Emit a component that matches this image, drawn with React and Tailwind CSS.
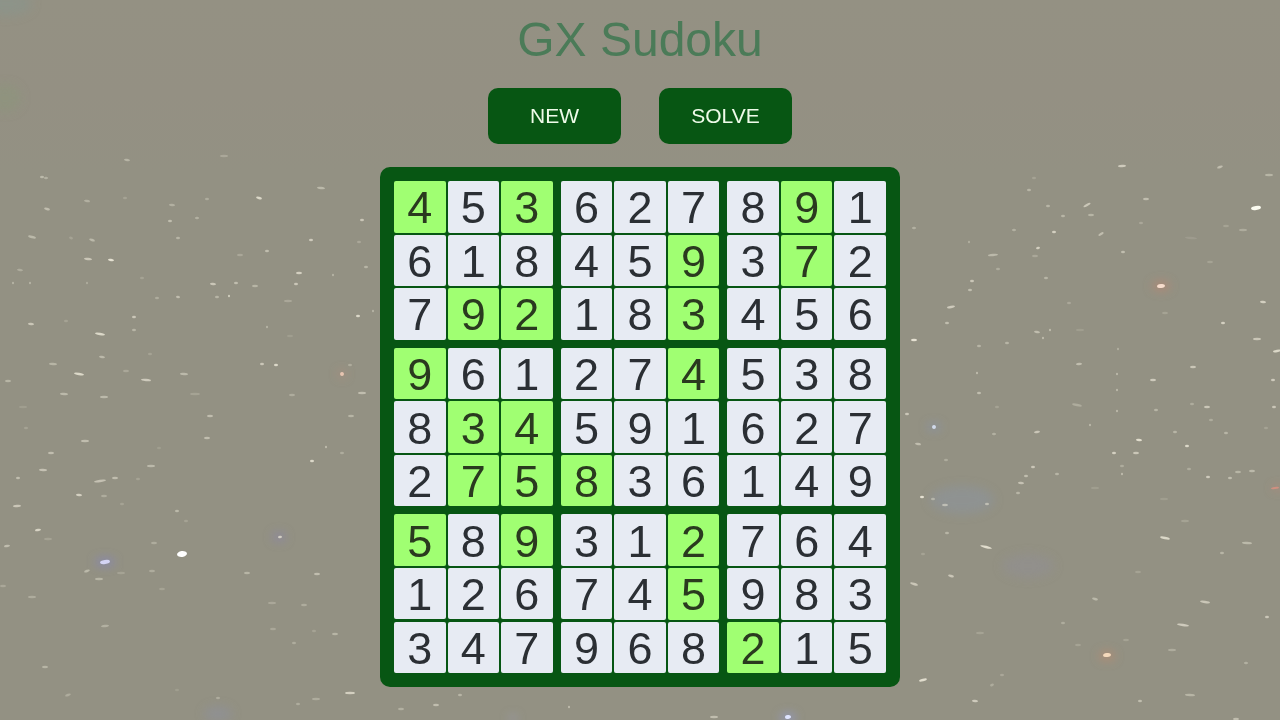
import { useState } from 'react'

const PUZZLE = [
  '453627891',
  '618459372',
  '792183456',
  '961274538',
  '834591627',
  '275836149',
  '589312764',
  '126745983',
  '347968215',
]

// row-major, 1 = given by the puzzle
const GIVEN = [
  '101000010',
  '000001010',
  '011001000',
  '100001000',
  '011000000',
  '011100000',
  '101001000',
  '000001000',
  '000000100',
]

// x, y, half length, opacity, tilt
const STARS = [
  [127, 160, 3, 0.4, 10], [224, 156, 4, 0.25, 0], [42, 177, 2, 0.45, 0], [46, 178, 2, 0.35, 0],
  [321, 188, 4, 0.45, 8], [87, 201, 3, 0.35, 8], [47, 209, 3, 0.5, 15], [125, 198, 2, 0.2, 0],
  [207, 199, 2, 0.3, 0], [259, 198, 3, 0.8, 15], [172, 205, 3, 0.35, 5], [170, 221, 2, 0.5, 0],
  [197, 218, 2, 0.35, 0], [178, 238, 2, 0.4, 0], [362, 220, 2, 0.6, 0], [311, 240, 2, 0.65, 0],
  [32, 237, 4, 0.45, 15], [92, 240, 3, 0.45, 20], [71, 238, 2, 0.2, 20], [359, 242, 2, 0.25, 0],
  [88, 259, 4, 0.6, 8], [111, 260, 3, 0.9, 10], [267, 251, 2, 0.5, 0], [240, 255, 3, 0.25, 0],
  [20, 270, 3, 0.3, 10], [299, 273, 3, 0.7, 0], [296, 284, 2, 0.6, 0], [333, 275, 1, 0.4, 0],
  [366, 267, 2, 0.4, 0], [13, 283, 1, 0.4, 0], [30, 283, 1, 0.4, 0], [87, 283, 1, 0.3, 0],
  [213, 284, 3, 0.6, 5], [236, 283, 2, 0.5, 0], [255, 286, 3, 0.4, 0], [142, 278, 2, 0.2, 0],
  [157, 298, 2, 0.3, 0], [178, 297, 2, 0.5, 5], [217, 297, 2, 0.4, 0], [229, 296, 1, 0.7, 0],
  [288, 301, 4, 0.25, 0], [134, 317, 2, 0.6, 0], [358, 316, 2, 0.8, 0], [373, 311, 1, 0.4, 0],
  [31, 324, 3, 0.6, 5], [66, 321, 2, 0.2, 0], [100, 334, 5, 0.8, 10], [134, 330, 2, 0.4, 0],
  [267, 327, 1, 0.4, 0], [290, 336, 3, 0.15, 0], [102, 357, 3, 0.45, 10], [150, 354, 2, 0.2, 0],
  [53, 364, 4, 0.4, 5], [79, 374, 5, 0.8, 10], [146, 380, 5, 0.65, 5], [184, 374, 4, 0.45, 5],
  [126, 371, 3, 0.25, 0], [8, 381, 3, 0.4, 0], [262, 364, 2, 0.6, 0], [276, 365, 2, 0.8, 0],
  [350, 365, 2, 0.3, 0], [64, 394, 4, 0.45, 5], [104, 397, 4, 0.45, 0], [195, 394, 5, 0.2, 0],
  [292, 395, 3, 0.3, 0], [362, 393, 4, 0.5, 0], [23, 407, 4, 0.15, 0], [210, 416, 3, 0.5, 0],
  [351, 416, 3, 0.4, 0], [26, 428, 2, 0.2, 0], [85, 441, 4, 0.5, 0], [207, 438, 3, 0.5, 0],
  [326, 447, 1, 0.5, 0], [51, 453, 3, 0.5, 0], [159, 448, 2, 0.15, 0], [342, 453, 2, 0.3, 0],
  [43, 470, 4, 0.55, 3], [151, 466, 4, 0.45, 0], [312, 461, 2, 0.8, 0], [18, 478, 2, 0.5, 0],
  [100, 481, 6, 0.55, -8], [115, 478, 3, 0.5, 0], [138, 479, 2, 0.2, 0], [79, 495, 3, 0.7, 5],
  [104, 496, 3, 0.3, 0], [17, 506, 4, 0.6, -5], [122, 504, 2, 0.2, 0], [177, 511, 2, 0.45, 0],
  [38, 530, 3, 0.75, -8], [48, 539, 4, 0.2, 0], [186, 521, 2, 0.2, 0], [7, 546, 3, 0.5, -8],
  [154, 543, 3, 0.3, 0], [280, 537, 2, 0.7, -10], [87, 571, 3, 0.45, -20], [99, 579, 4, 0.4, 0],
  [121, 573, 4, 0.2, 0], [152, 571, 3, 0.3, 0], [247, 573, 3, 0.4, 0], [317, 574, 3, 0.5, 0],
  [3, 586, 3, 0.25, 0], [32, 597, 4, 0.3, 0], [162, 589, 3, 0.2, 0], [272, 603, 4, 0.25, 0],
  [304, 605, 3, 0.3, 0], [105, 626, 4, 0.35, -8], [273, 629, 3, 0.25, 0], [335, 634, 3, 0.4, 0],
  [314, 631, 2, 0.2, 0], [294, 643, 2, 0.3, 0], [45, 667, 3, 0.4, 0], [68, 695, 3, 0.3, -20],
  [177, 690, 2, 0.15, 0], [218, 698, 2, 0.3, 0], [350, 693, 5, 0.7, 0], [316, 699, 4, 0.3, 0],
  [298, 704, 2, 0.3, 0],
  [1122, 166, 4, 0.65, -5], [1220, 167, 3, 0.5, -20], [1269, 175, 4, 0.4, 0], [1029, 190, 2, 0.4, 0],
  [1034, 178, 2, 0.2, 0], [1146, 199, 3, 0.5, 0], [1048, 206, 2, 0.4, 0], [1087, 205, 4, 0.6, -30],
  [1091, 215, 3, 0.4, 0], [1063, 216, 2, 0.4, 0], [1141, 223, 2, 0.25, 0], [914, 228, 2, 0.35, 0],
  [1014, 230, 2, 0.35, 0], [1054, 232, 2, 0.7, 0], [1101, 234, 3, 0.5, -30], [1226, 226, 3, 0.2, 0],
  [1243, 230, 4, 0.3, 0], [969, 242, 1, 0.35, 0], [1038, 248, 2, 0.7, -15], [1123, 252, 2, 0.5, 0],
  [993, 255, 5, 0.45, -5], [1035, 256, 3, 0.25, 0], [1191, 238, 6, 0.12, 5], [1210, 262, 3, 0.2, 0],
  [998, 269, 2, 0.3, 0], [972, 281, 2, 0.6, 0], [970, 290, 2, 0.5, 0], [1046, 278, 2, 0.4, 0],
  [951, 307, 4, 0.65, -10], [947, 323, 2, 0.5, 0], [1069, 303, 2, 0.25, 0], [1165, 313, 3, 0.2, 0],
  [1263, 302, 3, 0.7, 5], [1223, 323, 2, 0.7, 0], [914, 340, 3, 0.9, 0], [1037, 332, 3, 0.5, 10],
  [1043, 338, 1, 0.5, 0], [1050, 330, 1, 0.5, 0], [1007, 343, 2, 0.4, 0], [979, 346, 2, 0.4, 0],
  [1080, 330, 4, 0.15, 0], [1257, 339, 4, 0.6, 0], [1277, 351, 4, 0.8, -10], [1118, 349, 1, 0.35, 0],
  [1079, 364, 3, 0.5, -5], [1193, 367, 3, 0.6, 0], [1153, 380, 3, 0.65, 0], [1273, 380, 2, 0.65, 0],
  [1117, 374, 1, 0.45, 0], [1117, 390, 1, 0.45, 0], [1117, 411, 1, 0.45, 0], [977, 373, 1, 0.5, 0],
  [979, 393, 2, 0.5, 0], [1077, 405, 5, 0.3, 12], [997, 407, 2, 0.2, 0], [907, 414, 2, 0.6, 0],
  [1156, 410, 2, 0.4, 0], [1207, 407, 3, 0.6, 0], [1192, 404, 2, 0.3, 0], [1274, 407, 2, 0.6, 0],
  [1211, 420, 2, 0.3, 0], [1090, 425, 1, 0.45, 0], [1037, 432, 3, 0.6, -10], [1175, 432, 2, 0.4, 0],
  [994, 434, 2, 0.35, 0], [1226, 433, 2, 0.4, 0], [1266, 428, 2, 0.2, 0], [1139, 440, 3, 0.85, 5],
  [1187, 446, 2, 0.8, 0], [918, 444, 3, 0.5, 8], [1114, 453, 2, 0.7, 0], [1136, 453, 3, 0.6, 0],
  [946, 460, 2, 0.3, 0], [1033, 467, 2, 0.6, 0], [1026, 476, 2, 0.5, 0], [1057, 474, 2, 0.4, 0],
  [1122, 466, 2, 0.3, 0], [1122, 474, 1, 0.5, 0], [1021, 483, 3, 0.55, 5], [1018, 493, 2, 0.4, 0],
  [1208, 477, 2, 0.65, 0], [1230, 478, 2, 0.5, 0], [1238, 472, 3, 0.4, 0], [1252, 471, 3, 0.45, 0],
  [1189, 469, 2, 0.3, 0], [1095, 488, 4, 0.15, 0], [922, 497, 2, 0.9, 0], [933, 499, 2, 0.4, 0],
  [945, 505, 3, 0.5, 0], [987, 504, 2, 0.5, 0], [1164, 499, 4, 0.15, 0], [1185, 521, 4, 0.2, 0],
  [947, 533, 2, 0.4, 0], [986, 547, 6, 0.85, 14], [1165, 538, 5, 0.8, 12], [1247, 543, 5, 0.45, 3],
  [1222, 553, 2, 0.4, 0], [923, 554, 2, 0.2, 0], [951, 576, 3, 0.6, 15], [914, 584, 4, 0.6, 18],
  [1138, 572, 3, 0.2, 0], [1095, 599, 3, 0.45, 15], [1205, 602, 5, 0.6, 8], [1267, 617, 2, 0.6, 0],
  [1183, 625, 6, 0.65, 8], [1063, 623, 2, 0.3, 0], [980, 633, 4, 0.2, 0], [1126, 640, 3, 0.2, 0],
  [1172, 650, 4, 0.3, 0], [1078, 645, 3, 0.2, 0], [1246, 663, 2, 0.35, 0], [923, 680, 4, 0.85, -15],
  [1002, 675, 2, 0.25, 0], [992, 685, 2, 0.3, -20], [975, 701, 3, 0.65, 5], [1140, 701, 2, 0.5, 0],
  [1190, 695, 5, 0.4, 3], [1236, 719, 3, 0.5, 0],
  [401, 709, 3, 0.35, 0], [436, 705, 3, 0.5, 0], [460, 695, 2, 0.4, 0], [569, 707, 1, 0.5, 0],
  [714, 717, 4, 0.5, 0],
]

// x, y, rx, ry, colour, opacity
const HAZE = [
  [962, 500, 32, 14, '#8c93a0', 0.5],
  [1028, 566, 26, 12, '#928f94', 0.5],
  [6, 4, 26, 12, '#87958f', 0.5],
  [5, 98, 16, 14, '#8c967a', 0.5],
  [218, 714, 14, 8, '#8e929f', 0.5],
  [105, 562, 10, 4, '#8484bc', 0.8],
  [279, 537, 7, 5, '#8a84a8', 0.7],
  [934, 427, 7, 4, '#8692b0', 0.6],
  [1161, 286, 9, 5, '#bb8570', 0.7],
  [1107, 656, 8, 5, '#bb8a6e', 0.7],
  [342, 374, 4, 4, '#b88c78', 0.6],
  [1278, 488, 6, 2, '#c98272', 0.7],
  [513, 718, 4, 3, '#9a9cb8', 0.7],
  [788, 718, 8, 5, '#9298c4', 0.8],
]

const BRIGHT = [
  [182, 554, 5, 3, '#ffffff'],
  [105, 562, 5, 2, '#d4d4f4'],
  [1256, 208, 5, 2, '#fbfbf0'],
  [1161, 286, 4, 2, '#f6dccc'],
  [1107, 655, 4, 2, '#f4d9bc'],
  [934, 427, 2, 2, '#d0d9ea'],
  [342, 374, 2, 2, '#e6c4b0'],
  [1275, 488, 4, 1, '#cf9080'],
  [788, 717, 3, 2, '#dfe4ff'],
]

function Starfield() {
  return (
    <svg
      className="absolute inset-0 h-full w-full"
      viewBox="0 0 1280 720"
      preserveAspectRatio="xMidYMid slice"
      aria-hidden="true"
    >
      <defs>
        <filter id="haze" x="-100%" y="-100%" width="300%" height="300%">
          <feGaussianBlur stdDeviation="5" />
        </filter>
        <filter id="glow" x="-50%" y="-100%" width="200%" height="300%">
          <feGaussianBlur stdDeviation="0.7" />
        </filter>
        <linearGradient id="dust" x1="0" y1="0" x2="0" y2="1">
          <stop offset="0" stopColor="#949183" />
          <stop offset="0.13" stopColor="#949083" />
          <stop offset="0.24" stopColor="#939183" />
          <stop offset="1" stopColor="#939183" />
        </linearGradient>
      </defs>
      <rect width="1280" height="720" fill="url(#dust)" />
      <g filter="url(#haze)">
        {HAZE.map(([x, y, rx, ry, fill, o]) => (
          <ellipse key={`${x}-${y}`} cx={x} cy={y} rx={rx} ry={ry} fill={fill} opacity={o} />
        ))}
      </g>
      <g filter="url(#glow)" fill="#eeeada">
        {STARS.map(([x, y, r, o, tilt]) => (
          <ellipse key={`${x}-${y}`} cx={x} cy={y} rx={r} ry="1.2" opacity={o} transform={`rotate(${tilt} ${x} ${y})`} />
        ))}
        {BRIGHT.map(([x, y, rx, ry, fill]) => (
          <ellipse key={`${x}-${y}`} cx={x} cy={y} rx={rx} ry={ry} fill={fill} transform={`rotate(-8 ${x} ${y})`} />
        ))}
      </g>
    </svg>
  )
}

function ActionButton({ children, onClick }) {
  return (
    <button
      type="button"
      onClick={onClick}
      className="h-14 w-[133px] rounded-[10px] bg-[#075613] text-[21px] text-[#eefbe9] hover:bg-[#0b6a1a]"
    >
      {children}
    </button>
  )
}

function Cell({ value, given }) {
  return (
    <button
      type="button"
      className={`flex aspect-square items-center justify-center rounded-[2px] pt-[2px] text-[45px] leading-none ${
        given ? 'bg-[#a0ff72] text-[#2a3a1f]' : 'bg-[#e7ebf3] text-[#2b2f34]'
      }`}
    >
      {value}
    </button>
  )
}

function Block({ index, solved }) {
  const top = Math.floor(index / 3) * 3
  const left = (index % 3) * 3

  return (
    <div className="grid grid-cols-3 gap-[2px]">
      {Array.from({ length: 9 }, (_, i) => {
        const r = top + Math.floor(i / 3)
        const c = left + (i % 3)
        const given = GIVEN[r][c] === '1'
        return <Cell key={i} given={given} value={given || solved ? PUZZLE[r][c] : ''} />
      })}
    </div>
  )
}

export default function App() {
  const [solved, setSolved] = useState(true)

  return (
    <div className="relative min-h-screen overflow-hidden bg-[#939183] font-['Liberation_Sans',Arial,sans-serif]">
      <Starfield />
      <main className="relative flex flex-col items-center px-4 pt-3 pb-8">
        <h1 className="text-[48px] leading-[56px] text-[#4b7b58]">GX Sudoku</h1>

        <div className="mt-5 flex gap-[38px]">
          <ActionButton onClick={() => setSolved(false)}>NEW</ActionButton>
          <ActionButton onClick={() => setSolved(true)}>SOLVE</ActionButton>
        </div>

        <div className="mt-[23px] grid w-full max-w-[520px] grid-cols-3 gap-2 rounded-[10px] bg-[#075613] p-[14px]">
          {Array.from({ length: 9 }, (_, i) => (
            <Block key={i} index={i} solved={solved} />
          ))}
        </div>
      </main>
    </div>
  )
}
